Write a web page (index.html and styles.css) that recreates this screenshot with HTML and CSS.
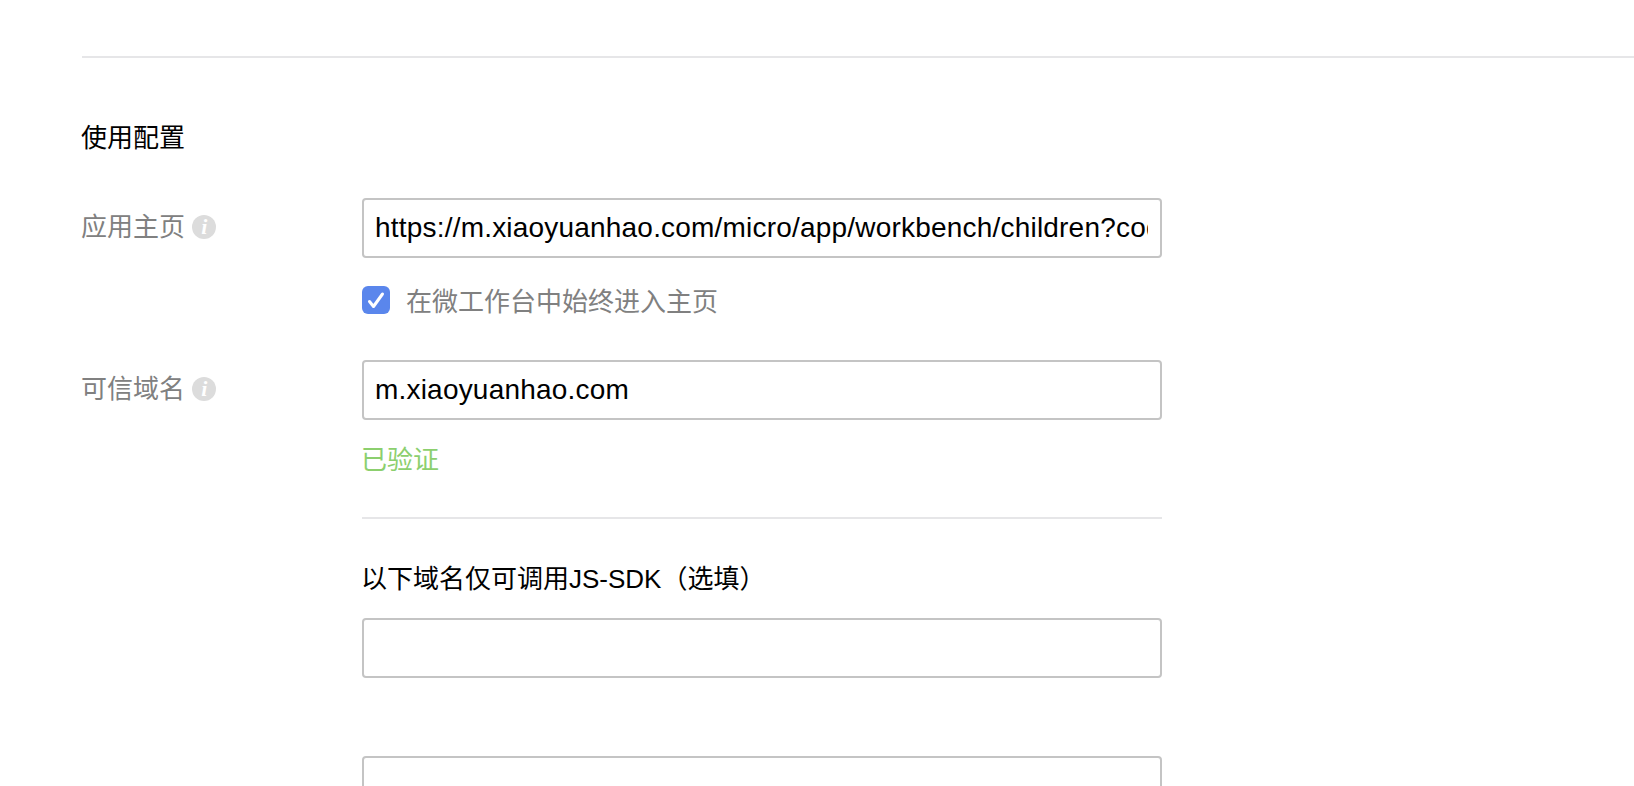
FILE: index.html
```html
<!DOCTYPE html>
<html lang="zh-CN">
<head>
  <meta charset="UTF-8">
  <title>使用配置</title>
  <link rel="stylesheet" href="styles.css">
</head>
<body>
  <div class="page">
    <hr class="top-line">
    <h3 class="section-title">使用配置</h3>

    <!-- 应用主页 -->
    <div class="form-row row-home">
      <div class="form-label">应用主页 <span class="info">i</span></div>
      <div class="form-field">
        <input type="text" class="text-input" value="https://m.xiaoyuanhao.com/micro/app/workbench/children?code=">
        <label class="check-line">
          <span class="check-box">
            <svg width="28" height="28" viewBox="0 0 28 28"><path d="M7.5 15.5 L11.5 20.5 L20.5 8" fill="none" stroke="#fff" stroke-width="3" stroke-linecap="round" stroke-linejoin="round"/></svg>
          </span>
          <span class="check-text">在微工作台中始终进入主页</span>
        </label>
      </div>
    </div>

    <!-- 可信域名 -->
    <div class="form-row row-domain">
      <div class="form-label">可信域名 <span class="info">i</span></div>
      <div class="form-field">
        <input type="text" class="text-input" value="m.xiaoyuanhao.com">
        <p class="verified">已验证</p>
        <hr class="field-line">
        <p class="sub-title">以下域名仅可调用JS-SDK（选填）</p>
        <input type="text" class="text-input">
        <input type="text" class="text-input extra-input">
      </div>
    </div>
  </div>
</body>
</html>
```

FILE: styles.css
```css
html, body {
  height: 100%;
  overflow: hidden;
}
body {
  margin: 0;
  background: #fff;
  color: #000;
  font-family: "Liberation Sans", "Noto Sans CJK SC", sans-serif;
  font-size: 26px;
}
.page {
  padding: 56px 0 0 82px;
}
.top-line {
  margin: 0;
  border: none;
  border-top: 2px solid #e6e6e8;
}
.section-title {
  margin: 60px 0 0 -1px;
  font-size: 26px;
  font-weight: normal;
  line-height: 40px;
}
.form-row {
  display: flex;
}
.row-home {
  margin-top: 40px;
}
.row-domain {
  margin-top: 46px;
}
.form-label {
  width: 281px;
  margin-left: -1px;
  flex-shrink: 0;
  padding-top: 9px;
  line-height: 40px;
  color: #808080;
}
.info {
  display: inline-block;
  width: 24px;
  height: 24px;
  border-radius: 50%;
  background: #dcdcdc;
  color: #fff;
  font-family: "Liberation Serif", serif;
  font-size: 22px;
  font-style: italic;
  font-weight: bold;
  line-height: 24px;
  text-align: center;
  vertical-align: 2px;
}
.form-field {
  width: 800px;
}
.text-input {
  display: block;
  box-sizing: border-box;
  width: 100%;
  height: 60px;
  padding: 0 12px 0 11px;
  border: 2px solid #c4c4c4;
  border-radius: 4px;
  outline: none;
  background: #fff;
  color: #000;
  font-family: inherit;
  font-size: 28px;
  font-kerning: none;
  letter-spacing: 0.2px;
}
.check-line {
  display: flex;
  align-items: center;
  gap: 16px;
  margin-top: 28px;
  height: 28px;
  color: #808080;
}
.check-text {
  margin-top: -2px;
}
.check-box {
  display: flex;
  align-items: center;
  justify-content: center;
  width: 28px;
  height: 28px;
  border-radius: 6px;
  background: #5a86ec;
}
.verified {
  margin: 20px 0 0 -1px;
  line-height: 40px;
  color: #8ccf6e;
}
.field-line {
  margin: 37px 0 0;
  border: none;
  border-top: 2px solid #e6e6e8;
}
.sub-title {
  margin: 40px 0 0 -1px;
  line-height: 40px;
}
.sub-title + .text-input {
  margin-top: 19px;
}
.extra-input {
  margin-top: 78px;
}
```
